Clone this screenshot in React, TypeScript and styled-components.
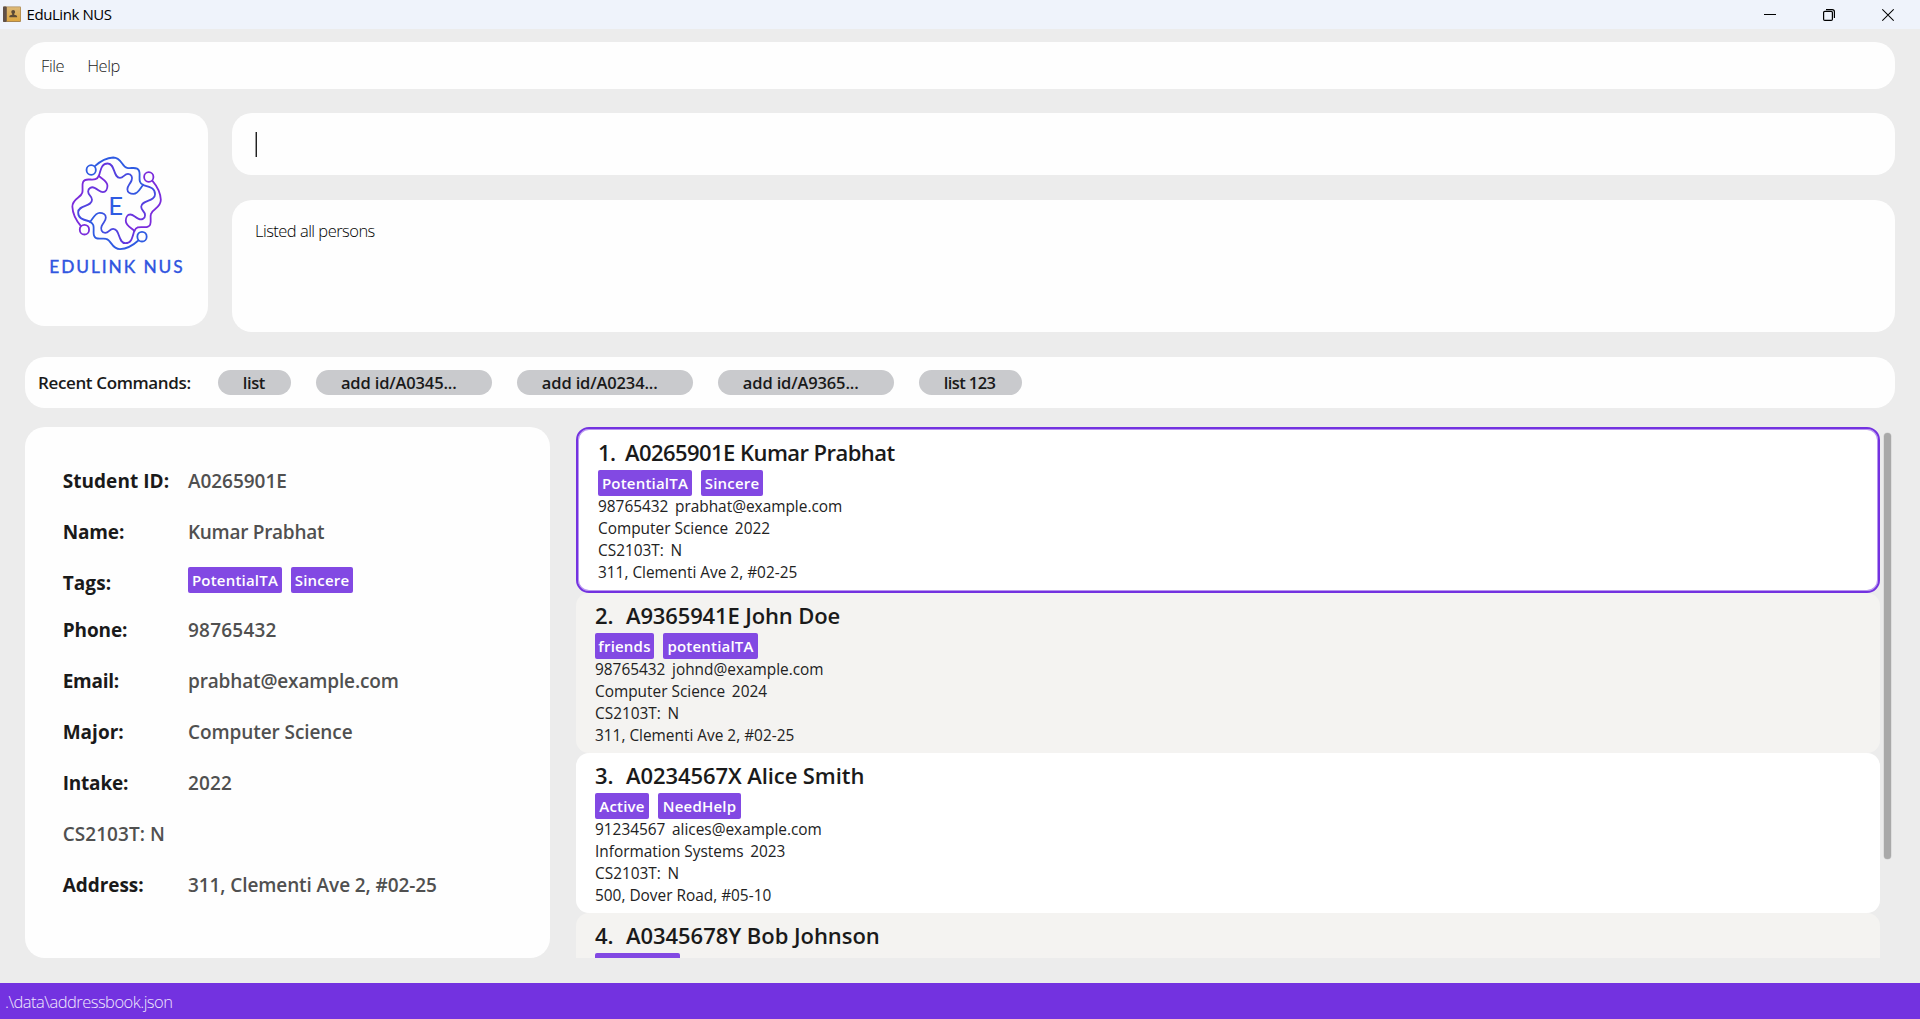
import React from "react";
import styled, { createGlobalStyle } from "styled-components";

const FONT = '"Open Sans", "Noto Sans", sans-serif';

const GlobalStyle = createGlobalStyle`
  * { box-sizing: border-box; }
  body { margin: 0; background: #ececec; font-family: ${FONT}; color: #1a1a1a; }
`;

const Window = styled.div`
  display: flex;
  flex-direction: column;
  width: 100%;
  height: 100vh;
  min-height: 1019px;
  overflow: hidden;
`;

/* ---------- title bar ---------- */
const TitleBar = styled.header`
  flex: none;
  display: flex;
  align-items: center;
  height: 29px;
  padding: 0 26px 0 3px;
  background: #eff3fb;
`;
const WindowTitle = styled.span`
  flex: 1;
  margin-left: 5.5px;
  font-size: 15px;
  line-height: 29px;
  letter-spacing: -0.42px;
  color: #000;
`;
const WindowButtons = styled.div`
  display: flex;
  gap: 47px;
  height: 29px;
  align-items: center;
`;

/* ---------- page ---------- */
const Page = styled.main`
  flex: 1;
  min-height: 0;
  display: flex;
  flex-direction: column;
  padding: 13px 25px 25px;
`;
const Panel = styled.div`
  background: #fefefe;
  border-radius: 20px;
`;
const MenuBar = styled(Panel)`
  flex: none;
  display: flex;
  gap: 23px;
  height: 47px;
  padding-left: 16px;
`;
const MenuItem = styled.span<{ $track: number }>`
  font-size: 16.5px;
  font-weight: 300;
  line-height: 47px;
  letter-spacing: ${(p) => p.$track}px;
  color: #1c1c1c;
`;
const TopSection = styled.section`
  flex: none;
  display: flex;
  gap: 24px;
  margin-top: 24px;
`;
const LogoCard = styled(Panel)`
  width: 183px;
  height: 213px;
`;
const ConsoleColumn = styled.div`
  flex: 1;
  display: flex;
  flex-direction: column;
  gap: 25px;
`;
const CommandBox = styled(Panel)`
  display: flex;
  align-items: center;
  height: 62px;
  padding-left: 23px;
`;
const Caret = styled.span`
  width: 2px;
  height: 25px;
  margin-top: 1px;
  background: #222;
  border-left: 1px solid #999;
`;
const ResultBox = styled(Panel)`
  height: 132px;
  padding: 19px 23px;
  font-size: 16.5px;
  font-weight: 300;
  line-height: 23px;
  letter-spacing: -0.52px;
  color: #000;
`;

/* ---------- recent commands ---------- */
const RecentBar = styled(Panel)`
  flex: none;
  display: flex;
  align-items: center;
  gap: 24.6px;
  height: 51px;
  margin-top: 25px;
  padding-left: 13px;
`;
const RecentLabel = styled.span`
  width: 155px;
  font-size: 17px;
  font-weight: 600;
  letter-spacing: -0.37px;
  white-space: nowrap;
`;
const Pill = styled.span<{ $width: number; $track: number }>`
  width: ${(p) => p.$width}px;
  height: 25px;
  padding-left: 25.2px;
  border-radius: 12.5px;
  background: #c9cacd;
  font-size: 16.5px;
  font-weight: 600;
  line-height: 25px;
  letter-spacing: ${(p) => p.$track}px;
  white-space: nowrap;
`;

/* ---------- details ---------- */
const Content = styled.section`
  flex: 1;
  min-height: 0;
  display: flex;
  margin-top: 19px;
`;
const Details = styled(Panel)`
  flex: none;
  width: 525px;
  padding: 29px 0 0 37.7px;
`;
const DetailRow = styled.div<{ $short?: boolean }>`
  display: flex;
  height: ${(p) => (p.$short ? 46.5 : 51)}px;
  font-size: 19px;
  font-weight: 600;
  line-height: 51px;
  color: #505050;
  white-space: nowrap;
`;
const DetailLabel = styled.span<{ $track: number }>`
  width: 125.3px;
  font-weight: 700;
  letter-spacing: ${(p) => p.$track}px;
  color: #1a1a1a;
`;
const DetailValue = styled.span<{ $track: number }>`
  letter-spacing: ${(p) => p.$track}px;
`;

const Tags = styled.div<{ $top?: number }>`
  display: flex;
  gap: 9px;
  padding-top: ${(p) => p.$top ?? 0}px;
`;
const Tag = styled.span<{ $width: number }>`
  width: ${(p) => p.$width}px;
  height: 26px;
  border-radius: 2px;
  background: #8249e3;
  color: #fff;
  font-size: 15px;
  font-weight: 550;
  line-height: 26px;
  letter-spacing: 0.2px;
  text-align: center;
  white-space: nowrap;
`;

/* ---------- person list ---------- */
const PersonList = styled.div`
  flex: 1;
  min-width: 0;
  margin-left: 26px;
  overflow: hidden;
`;
const PersonCard = styled.article<{ $selected: boolean; $alt: boolean }>`
  height: ${(p) => (p.$selected ? 166 : 160)}px;
  padding: ${(p) => (p.$selected ? "8px 20px" : "7px 19px")};
  border: ${(p) => (p.$selected ? "2px solid #7332e0" : "none")};
  box-shadow: ${(p) => (p.$selected ? "inset 0 0 0 1px #b795ef" : "none")};
  border-radius: 13px;
  background: ${(p) => (p.$alt ? "#f4f3f1" : "#ffffff")};
`;
const PersonName = styled.h2<{ $track: number }>`
  display: flex;
  height: 33px;
  margin: 0;
  font-size: 22px;
  font-weight: 600;
  line-height: 30px;
  letter-spacing: ${(p) => p.$track}px;
  white-space: nowrap;
`;
const PersonIndex = styled.span<{ $width: number }>`
  width: ${(p) => p.$width}px;
`;
const PersonLines = styled.div`
  margin-top: 0;
`;
const PersonLine = styled.div`
  display: flex;
  gap: 6.6px;
  height: 22px;
  font-size: 15.4px;
  line-height: 22px;
  color: #222;
  white-space: nowrap;
`;
const ScrollTrack = styled.div`
  flex: none;
  width: 15px;
  padding: 6px 0 0 4px;
`;
const ScrollThumb = styled.div`
  width: 7px;
  height: 426px;
  border-radius: 4px;
  background: #a9a9a9;
  box-shadow: 0 0 0 0.5px #cfcfcf;
`;

const StatusBar = styled.footer`
  flex: none;
  height: 36px;
  padding-left: 5px;
  background: #7332e0;
  color: #f0e8fc;
  font-size: 16.5px;
  font-weight: 300;
  line-height: 37px;
  letter-spacing: -0.51px;
`;

function BookIcon() {
  return (
    <svg width="18" height="17" viewBox="0 0 18 17">
      <defs>
        <linearGradient id="cover" x1="0" y1="0" x2="0" y2="1">
          <stop offset="0" stopColor="#dcb878" />
          <stop offset="1" stopColor="#dda640" />
        </linearGradient>
      </defs>
      <rect x="0" y="0.5" width="18" height="15.5" rx="1" fill="#a88550" />
      <rect x="4" y="1.2" width="13.3" height="13.8" fill="url(#cover)" />
      <rect x="0" y="0.5" width="3.6" height="15.5" rx="1" fill="#5f5048" />
      <path d="M10.2 4c1.200 0 1.900.8 1.900 1.900 0 .8-.4 1.400-.9 1.800v1.100c1.200.3 2.900.5 2.900 1.600v.8H6.300v-.8c0-1.100 1.700-1.300 2.900-1.600v-1.100c-.5-.4-.9-1-.9-1.800 0-1.100.7-1.900 1.900-1.900z" fill="#5c4a36" />
    </svg>
  );
}

const OUTER =
  "M222 169 C240 153 256 144 279 143 C305 143 305 170 322 174 C336 178 361 165 361 193 C361 208 358 219 372 225";
const INNER =
  "M235 197 C242 171 246 161 262 161 C286 161 278 204 300 204 C312 204 313 192 325 192 C336 192 340 203 336 212 C330 225 323 228 323 238 C323 247 332 252 342 252 C357 252 362 236 372 225";

function Logo() {
  const arms = [
    { angle: 0, outer: "#2f5be2", inner: "url(#toBlue)" },
    { angle: 90, outer: "#7a2bdc", inner: "url(#toPurple)" },
    { angle: 180, outer: "#2f5be2", inner: "url(#toBlue)" },
    { angle: 270, outer: "#7a2bdc", inner: "url(#toPurple)" },
  ];
  return (
    <svg width="183" height="213" viewBox="15 9 549 639">
      <defs>
        <linearGradient id="toBlue" gradientUnits="userSpaceOnUse" x1="235" y1="170" x2="370" y2="225">
          <stop offset="0" stopColor="#6a30dd" />
          <stop offset="1" stopColor="#2f5be2" />
        </linearGradient>
        <linearGradient id="toPurple" gradientUnits="userSpaceOnUse" x1="235" y1="170" x2="370" y2="225">
          <stop offset="0" stopColor="#3d50e2" />
          <stop offset="1" stopColor="#7a2bdc" />
        </linearGradient>
      </defs>
      <g transform="translate(289.800 280) scale(0.965 1) translate(-289.500 -280.500)">
        <g fill="none" strokeWidth="5.6" strokeLinecap="round">
          {arms.map((a) => (
            <g key={a.angle} transform={`rotate(${a.angle} 289.500 280.500)`}>
              <circle cx="210.500" cy="180.500" r="14.500" stroke={a.outer} />
              <path d={OUTER} stroke={a.outer} />
              <path d={INNER} stroke={a.inner} />
            </g>
          ))}
        </g>
      </g>
      <text x="265" y="314" fontFamily="Lato, sans-serif" fontSize="77" fill="#2f5be2">E</text>
      <text x="88" y="488" fontFamily="Lato, sans-serif" fontSize="52" fontWeight="500" fill="#3156e0" stroke="#3156e0" strokeWidth="0.8" textLength="400">
        EDULINK NUS
      </text>
    </svg>
  );
}

const recent = [
  { text: "list", width: 73.5, track: -0.4 },
  { text: "add id/A0345...", width: 176.4, track: -0.15 },
  { text: "add id/A0234...", width: 176.4, track: -0.15 },
  { text: "add id/A9365...", width: 176.4, track: -0.15 },
  { text: "list 123", width: 103.4, track: -0.6 },
];

type TagData = { text: string; width: number };
type Row = { label?: string; labelTrack?: number; value?: string; valueTrack?: number; tags?: TagData[] };
const details: Row[] = [
  { label: "Student ID:", labelTrack: 0.05, value: "A0265901E", valueTrack: -0.05 },
  { label: "Name:", labelTrack: -0.15, value: "Kumar Prabhat", valueTrack: -0.28 },
  { label: "Tags:", labelTrack: 0.1, tags: [{ text: "PotentialTA", width: 94 }, { text: "Sincere", width: 62 }] },
  { label: "Phone:", labelTrack: -0.1, value: "98765432", valueTrack: 0.22 },
  { label: "Email:", labelTrack: -0.25, value: "prabhat@example.com", valueTrack: -0.15 },
  { label: "Major:", labelTrack: 0, value: "Computer Science", valueTrack: -0.08 },
  { label: "Intake:", labelTrack: -0.2, value: "2022", valueTrack: 0.15 },
  { value: "CS2103T: N", valueTrack: 0.05 },
  { label: "Address:", labelTrack: -0.05, value: "311, Clementi Ave 2, #02-25", valueTrack: -0.09 },
];

const people = [
  {
    index: "1.", indexWidth: 27, name: "A0265901E Kumar Prabhat", track: -0.56,
    tags: [{ text: "PotentialTA", width: 94 }, { text: "Sincere", width: 62 }],
    lines: [["98765432", "prabhat@example.com"], ["Computer Science", "2022"], ["CS2103T:", "N"], ["311, Clementi Ave 2, #02-25"]],
  },
  {
    index: "2.", indexWidth: 31, name: "A9365941E John Doe", track: -0.14,
    tags: [{ text: "friends", width: 59 }, { text: "potentialTA", width: 95 }],
    lines: [["98765432", "johnd@example.com"], ["Computer Science", "2024"], ["CS2103T:", "N"], ["311, Clementi Ave 2, #02-25"]],
  },
  {
    index: "3.", indexWidth: 31, name: "A0234567X Alice Smith", track: -0.08,
    tags: [{ text: "Active", width: 54 }, { text: "NeedHelp", width: 83 }],
    lines: [["91234567", "alices@example.com"], ["Information Systems", "2023"], ["CS2103T:", "N"], ["500, Dover Road, #05-10"]],
  },
  {
    index: "4.", indexWidth: 31, name: "A0345678Y Bob Johnson", track: -0.05,
    tags: [{ text: "", width: 85 }],
    lines: [],
  },
];

export default function App() {
  return (
    <Window>
      <GlobalStyle />
      <TitleBar>
        <BookIcon />
        <WindowTitle>EduLink NUS</WindowTitle>
        <WindowButtons>
          <svg width="12" height="14" viewBox="0 0 12 14">
            <path d="M0 6.500H12" stroke="#000" strokeWidth="1" />
          </svg>
          <svg width="12" height="14" viewBox="0 0 12 14" fill="none" stroke="#000" strokeWidth="1.2">
            <rect x="0.600" y="3.400" width="8.800" height="9" rx="1.200" />
            <path d="M3 1.600H9.200A2.200 2.200 0 0 1 11.400 3.800V10" />
          </svg>
          <svg width="12" height="14" viewBox="0 0 12 14">
            <path d="M0.300 1.300L11.700 12.700M11.700 1.300L0.300 12.700" stroke="#000" strokeWidth="1.150" />
          </svg>
        </WindowButtons>
      </TitleBar>
      <Page>
        <MenuBar>
          <MenuItem $track={-0.4}>File</MenuItem>
          <MenuItem $track={-0.5}>Help</MenuItem>
        </MenuBar>
        <TopSection>
          <LogoCard>
            <Logo />
          </LogoCard>
          <ConsoleColumn>
            <CommandBox>
              <Caret />
            </CommandBox>
            <ResultBox>Listed all persons</ResultBox>
          </ConsoleColumn>
        </TopSection>
        <RecentBar>
          <RecentLabel>Recent Commands:</RecentLabel>
          {recent.map((r) => (
            <Pill key={r.text} $width={r.width} $track={r.track}>
              {r.text}
            </Pill>
          ))}
        </RecentBar>
        <Content>
          <Details>
            {details.map((d, i) => (
              <DetailRow key={i} $short={!!d.tags}>
                {d.label && <DetailLabel $track={d.labelTrack ?? 0}>{d.label}</DetailLabel>}
                {d.value && <DetailValue $track={d.valueTrack ?? 0}>{d.value}</DetailValue>}
                {d.tags && (
                  <Tags $top={9}>
                    {d.tags.map((t) => (
                      <Tag key={t.text} $width={t.width}>
                        {t.text}
                      </Tag>
                    ))}
                  </Tags>
                )}
              </DetailRow>
            ))}
          </Details>
          <PersonList>
            {people.map((p, i) => (
              <PersonCard key={p.index} $selected={i === 0} $alt={i % 2 === 1}>
                <PersonName $track={p.track}>
                  <PersonIndex $width={p.indexWidth}>{p.index}</PersonIndex>
                  <span>{p.name}</span>
                </PersonName>
                <Tags>
                  {p.tags.map((t) => (
                    <Tag key={t.text} $width={t.width}>
                      {t.text}
                    </Tag>
                  ))}
                </Tags>
                <PersonLines>
                  {p.lines.map((line, j) => (
                    <PersonLine key={j}>
                      {line.map((part) => (
                        <span key={part}>{part}</span>
                      ))}
                    </PersonLine>
                  ))}
                </PersonLines>
              </PersonCard>
            ))}
          </PersonList>
          <ScrollTrack>
            <ScrollThumb />
          </ScrollTrack>
        </Content>
      </Page>
      <StatusBar>.\data\addressbook.json</StatusBar>
    </Window>
  );
}
